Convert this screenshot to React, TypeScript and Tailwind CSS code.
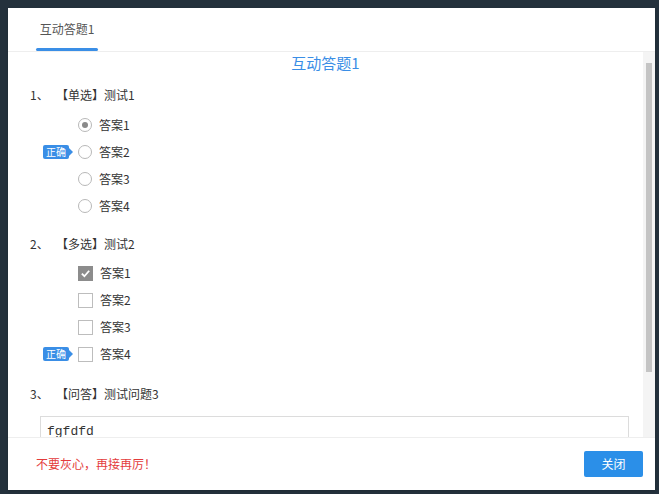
import React from 'react';

const font = { fontFamily: '"Noto Sans CJK SC", "Liberation Sans", sans-serif' };

const Badge = () => (
  <span className="relative mr-[9px] inline-flex h-[14px] w-[26px] items-center justify-center rounded-[2px] bg-[#3a8ee6] text-[10px] leading-none text-white">
    正确
    <span className="absolute right-[-4px] top-[3px] h-0 w-0 border-y-[4px] border-l-[4px] border-y-transparent border-l-[#3a8ee6]" />
  </span>
);

const Radio = ({ checked }: { checked?: boolean }) => (
  <span className="flex h-[14px] w-[14px] items-center justify-center rounded-full border border-[#b8b8b8] bg-white">
    {checked && <span className="h-[6px] w-[6px] rounded-full bg-[#8a8a8a]" />}
  </span>
);

const Check = ({ checked }: { checked?: boolean }) => (
  <span
    className={
      'flex h-[15px] w-[15px] items-center justify-center border ' +
      (checked ? 'border-[#8c8c8c] bg-[#8c8c8c]' : 'border-[#bdbdbd] bg-white')
    }
  >
    {checked && (
      <svg width="11" height="11" viewBox="0 0 12 12">
        <path d="M2 6.2 L4.8 9 L10 3" stroke="white" strokeWidth="2" fill="none" />
      </svg>
    )}
  </span>
);

const Option = ({ label, control, correct }: { label: string; control: React.ReactNode; correct?: boolean }) => (
  <div className="flex h-[27px] items-center">
    <div className="flex w-[70px] justify-end">{correct && <Badge />}</div>
    {control}
    <span className="ml-[7px] text-[12px] text-[#333]">{label}</span>
  </div>
);

const Question = ({ no, kind, text, className }: { no: string; kind: string; text: string; className: string }) => (
  <div className={'flex pl-[22px] text-[12px] text-[#333] ' + className}>
    <span className="w-[26px]">{no}、</span>
    <span>【{kind}】{text}</span>
  </div>
);

export default function App() {
  return (
    <div className="h-[494px] w-[659px] bg-[#24313c] p-[8px_4px_4px_8px]" style={font}>
      <div className="flex h-[482px] w-[647px] flex-col bg-white shadow">
        <div className="flex h-[44px] items-end border-b border-[#eeeeee] pl-[28px]">
          <div className="flex h-[41px] w-[62px] flex-col items-center justify-between">
            <span className="mt-[10px] text-[12px] text-[#555]">互动答题1</span>
            <span className="h-[3px] w-full rounded-full bg-[#3a8ee6]" />
          </div>
        </div>
        <div className="flex min-h-0 flex-1">
          <div className="flex-1 overflow-hidden">
            <div className="text-center text-[15px] text-[#3a8ee6]">互动答题1</div>
            <Question no="1" kind="单选" text="测试1" className="mt-[11px]" />
            <div className="mt-[8px]">
              <Option label="答案1" control={<Radio checked />} />
              <Option label="答案2" control={<Radio />} correct />
              <Option label="答案3" control={<Radio />} />
              <Option label="答案4" control={<Radio />} />
            </div>
            <Question no="2" kind="多选" text="测试2" className="mt-[15px]" />
            <div className="mt-[7px]">
              <Option label="答案1" control={<Check checked />} />
              <Option label="答案2" control={<Check />} />
              <Option label="答案3" control={<Check />} />
              <Option label="答案4" control={<Check />} correct />
            </div>
            <Question no="3" kind="问答" text="测试问题3" className="mt-[17px]" />
            <div
              className="ml-[32px] mr-[14px] mt-[13px] h-[40px] border border-[#dcdcdc] px-[6px] pt-[5px] text-[13px] text-[#333]"
              style={{ fontFamily: '"Liberation Mono", monospace' }}
            >
              fgfdfd
            </div>
          </div>
          <div className="flex w-[12px] justify-center bg-[#f4f4f4] pt-[11px]">
            <div className="h-[309px] w-[6px] bg-[#c4c4c4]" />
          </div>
        </div>
        <div className="flex h-[53px] items-center justify-between border-t border-[#eeeeee] pl-[28px] pr-[12px]">
          <span className="text-[12px] text-[#e33b3b]">不要灰心，再接再厉！</span>
          <button className="h-[26px] w-[59px] rounded-[2px] bg-[#2b8fe8] text-[12px] text-white">关闭</button>
        </div>
      </div>
    </div>
  );
}
